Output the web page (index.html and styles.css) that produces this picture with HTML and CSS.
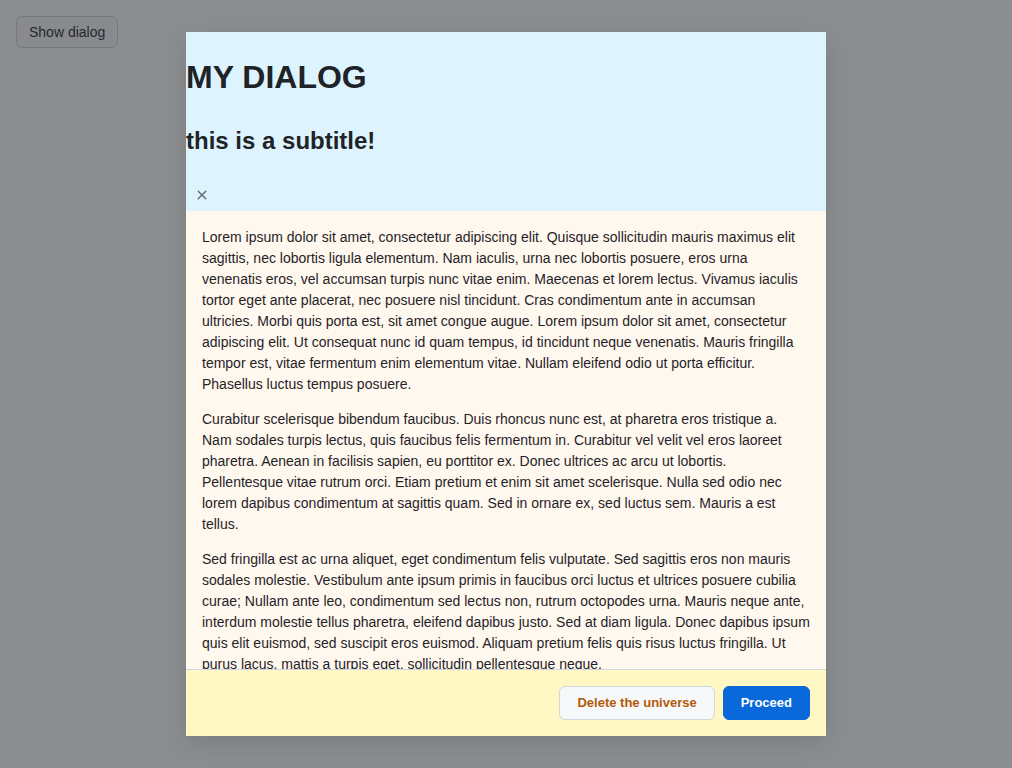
FILE: index.html
```html
<!DOCTYPE html>
<html lang="en">
<head>
<meta charset="utf-8">
<title>Dialog</title>
<link rel="stylesheet" href="styles.css">
</head>
<body>
<button class="show-btn" type="button">Show dialog</button>
<div class="backdrop">
  <div class="dialog" role="dialog" aria-labelledby="dlg-title">
    <header class="dialog-header">
      <h1 id="dlg-title" class="dialog-title">MY DIALOG</h1>
      <h2 class="dialog-subtitle">this is a subtitle!</h2>
      <button class="close-btn" type="button" aria-label="Close">
        <svg width="16" height="16" viewBox="0 0 16 16" aria-hidden="true"><path fill="currentColor" d="M3.72 3.72a.75.75 0 0 1 1.060 0L8 6.94l3.22-3.22a.749.749 0 0 1 1.275.326.749.749 0 0 1-.215.734L9.06 8l3.22 3.22a.749.749 0 0 1-.326 1.275.749.749 0 0 1-.734-.215L8 9.06l-3.22 3.22a.751.751 0 0 1-1.042-.018.751.751 0 0 1-.018-1.042L6.94 8 3.72 4.78a.75.75 0 0 1 0-1.06Z"/></svg>
      </button>
    </header>
    <div class="dialog-body">
      <p>Lorem ipsum dolor sit amet, consectetur adipiscing elit. Quisque sollicitudin mauris maximus elit sagittis, nec lobortis ligula elementum. Nam iaculis, urna nec lobortis posuere, eros urna venenatis eros, vel accumsan turpis nunc vitae enim. Maecenas et lorem lectus. Vivamus iaculis tortor eget ante placerat, nec posuere nisl tincidunt. Cras condimentum ante in accumsan ultricies. Morbi quis porta est, sit amet congue augue. Lorem ipsum dolor sit amet, consectetur adipiscing elit. Ut consequat nunc id quam tempus, id tincidunt neque venenatis. Mauris fringilla tempor est, vitae fermentum enim elementum vitae. Nullam eleifend odio ut porta efficitur. Phasellus luctus tempus posuere.</p>
      <p>Curabitur scelerisque bibendum faucibus. Duis rhoncus nunc est, at pharetra eros tristique a. Nam sodales turpis lectus, quis faucibus felis fermentum in. Curabitur vel velit vel eros laoreet pharetra. Aenean in facilisis sapien, eu porttitor ex. Donec ultrices ac arcu ut lobortis. Pellentesque vitae rutrum orci. Etiam pretium et enim sit amet scelerisque. Nulla sed odio nec lorem dapibus condimentum at sagittis quam. Sed in ornare ex, sed luctus sem. Mauris a est tellus.</p>
      <p>Sed fringilla est ac urna aliquet, eget condimentum felis vulputate. Sed sagittis eros non mauris sodales molestie. Vestibulum ante ipsum primis in faucibus orci luctus et ultrices posuere cubilia curae; Nullam ante leo, condimentum sed lectus non, rutrum octopodes urna. Mauris neque ante, interdum molestie tellus pharetra, eleifend dapibus justo. Sed at diam ligula. Donec dapibus ipsum quis elit euismod, sed suscipit eros euismod. Aliquam pretium felis quis risus luctus fringilla. Ut purus lacus, mattis a turpis eget, sollicitudin pellentesque neque.</p>
      <p>Nullam eleifend odio ut porta efficitur. Phasellus luctus tempus posuere. Curabitur scelerisque bibendum faucibus. Duis rhoncus nunc est, at pharetra eros tristique a. Nam sodales turpis lectus, quis faucibus felis fermentum in.</p>
    </div>
    <footer class="dialog-footer">
      <button class="btn btn-danger" type="button">Delete the universe</button>
      <button class="btn btn-primary" type="button">Proceed</button>
    </footer>
  </div>
</div>
</body>
</html>
```
FILE: styles.css
```css
html, body {
  height: 100%;
}
body {
  margin: 0;
  padding: 16px;
  box-sizing: border-box;
  background: #ffffff;
  font-family: "Liberation Sans", Arial, sans-serif;
  color: #1f2328;
}
.show-btn {
  height: 32px;
  padding: 0 12px;
  font-family: "Liberation Sans", Arial, sans-serif;
  font-size: 14px;
  color: #24292f;
  background: #f6f8fa;
  border: 1px solid #d0d7de;
  border-radius: 6px;
}
.backdrop {
  position: fixed;
  inset: 0;
  background: rgba(37, 39, 45, 0.53);
  display: flex;
  justify-content: center;
  align-items: flex-start;
  padding: 32px 0;
}
.dialog {
  width: 640px;
  height: 704px;
  display: flex;
  flex-direction: column;
  background: #ffffff;
  box-shadow: 0 8px 24px rgba(0, 0, 0, 0.12);
  overflow: hidden;
}
.dialog-header {
  flex: none;
  background: #ddf4ff;
  display: flex;
  flex-direction: column;
  align-items: flex-start;
}
.dialog-title {
  margin: 25px 0 0;
  font-size: 32px;
  line-height: 40px;
  font-weight: 700;
  color: #1f2328;
}
.dialog-subtitle {
  margin: 29px 0 0;
  font-size: 24px;
  line-height: 30px;
  font-weight: 700;
  color: #1f2328;
}
.close-btn {
  margin-top: 23px;
  width: 32px;
  height: 32px;
  padding: 0;
  border: 0;
  background: transparent;
  color: #656d76;
  display: flex;
  align-items: center;
  justify-content: center;
}
.dialog-body {
  flex: 1;
  min-height: 0;
  overflow: auto;
  scrollbar-width: none;
  background: #fff8ee;
  padding: 16px;
  font-size: 14px;
  line-height: 21px;
  color: #1f2328;
}
.dialog-body p {
  margin: 0 0 14px;
}
.dialog-footer {
  flex: none;
  background: #fff8c5;
  border-top: 1px solid #d0d7de;
  padding: 16px;
  display: flex;
  justify-content: flex-end;
  gap: 8px;
}
.btn {
  height: 34px;
  padding: 0 17px;
  border-radius: 6px;
  font-family: "Liberation Sans", Arial, sans-serif;
  font-size: 13px;
  font-weight: 700;
  line-height: 20px;
}
.btn-danger {
  background: #f6f8fa;
  border: 1px solid #d0d7de;
  color: #b4590a;
}
.btn-primary {
  background: #0969da;
  border: 1px solid #0969da;
  color: #ffffff;
}
```
